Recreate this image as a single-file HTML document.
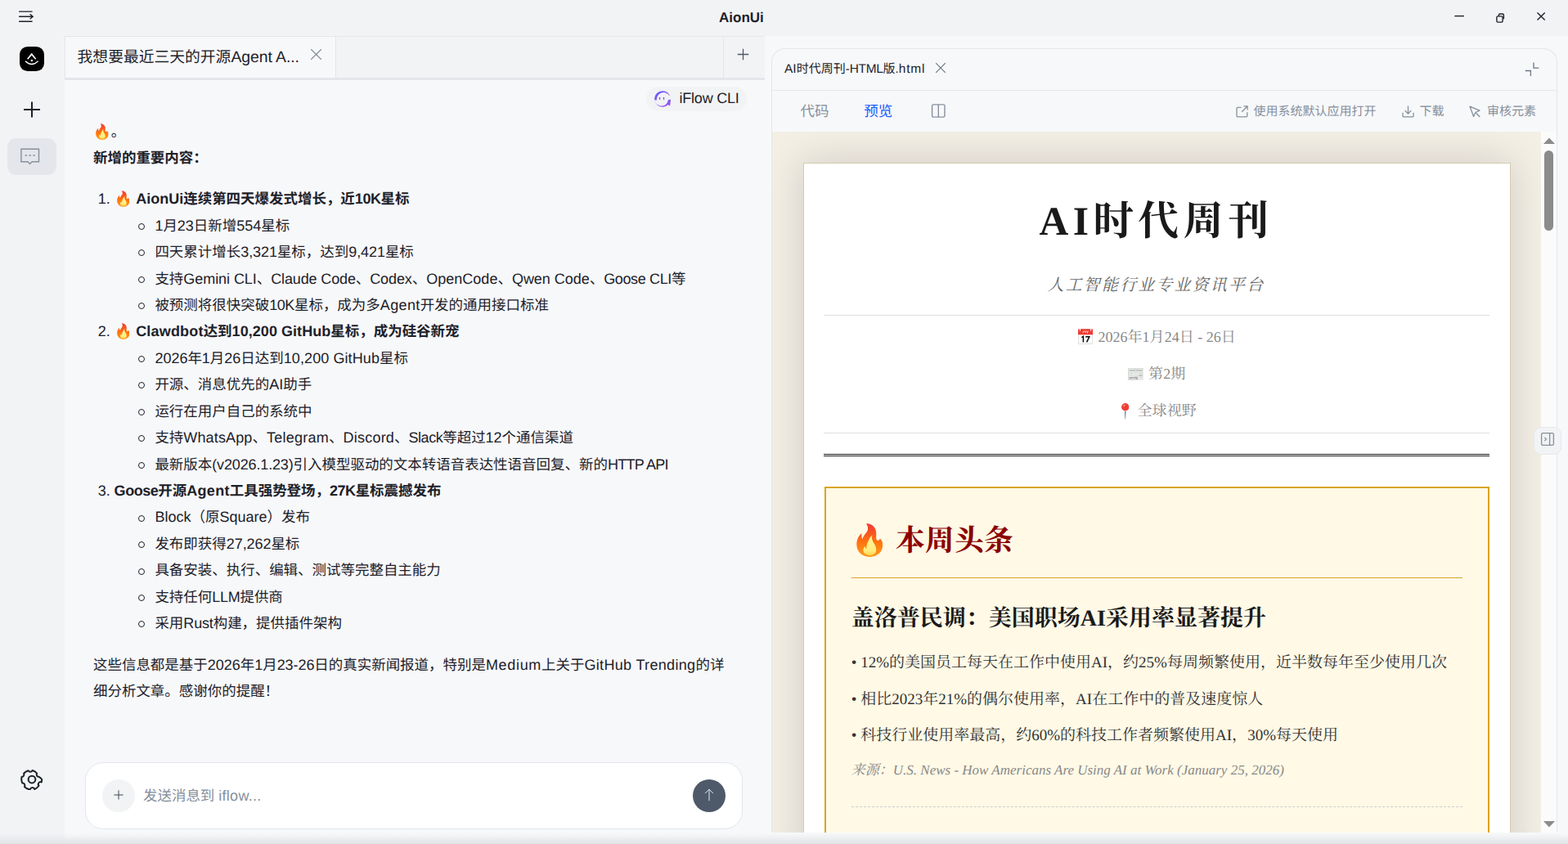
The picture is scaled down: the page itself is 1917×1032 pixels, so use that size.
<!DOCTYPE html>
<html lang="zh-CN"><head>
<meta charset="utf-8">
<title>AionUi</title>
<style>
*{box-sizing:border-box;margin:0;padding:0}
html,body{width:1917px;height:1032px;overflow:hidden}
body{background:#f2f3f5;font-family:"Liberation Sans","Noto Sans CJK SC",sans-serif;color:#1d2129;position:relative;-webkit-font-smoothing:antialiased;text-rendering:geometricPrecision}
.abs{position:absolute}
svg{display:block}
svg.em{display:inline-block}
/* ---------- title bar ---------- */
#title{position:absolute;left:806.4px;top:0;width:200px;height:44px;line-height:44px;text-align:center;font-weight:700;font-size:17px;color:#1d2129}
/* ---------- main area ---------- */
#main{position:absolute;left:79px;top:44px;width:1838px;height:988px;background:#f7f8fa}
#tabbar{position:absolute;left:0;top:0;width:856px;height:54px;background:#f2f3f5;border-top:1px solid #e5e6eb;border-left:1px solid #e5e6eb;border-bottom:3px solid #e5e6eb}
#tab{position:absolute;left:0;top:0;width:331px;height:50px;background:#f7f8fa;border-right:1px solid #e5e6eb;font-size:18.8px;line-height:50px;padding-left:14.6px;white-space:nowrap}
#tabplus{position:absolute;left:804px;top:0;width:52px;height:50px;border-left:1px solid #e5e6eb}
/* pill */
#pill{position:absolute;left:711px;top:62px;width:123px;height:30px;border-radius:15px;background:#f2f3f5;font-size:17.48px;line-height:28px;padding-left:40.5px;white-space:nowrap}
/* chat text */
#chat{position:absolute;left:35px;top:0;width:790px;font-size:17.48px;line-height:32.44px;color:#1d2129;white-space:nowrap}
#chat .ln{position:absolute;left:0;height:32.44px}
#chat .num{position:absolute;left:5.8px}
#chat .it{position:absolute;left:25.6px;font-weight:700}
#chat .sub{position:absolute;left:75.4px}
#chat .sub i{position:absolute;left:-20.3px;top:13.2px;width:8px;height:8px;border:1.4px solid #1d2129;border-radius:50%}
.em.fire{width:.9em;height:1.14em;margin:0 .172em;vertical-align:-.23em}
/* input */
#input{position:absolute;left:25px;top:888px;width:804px;height:82px;border:1px solid #e5e6eb;border-radius:22px;background:#fff}
#iplus{position:absolute;left:20px;top:20px;width:40px;height:40px;border-radius:50%;background:#f2f3f5}
#iph{position:absolute;left:70px;top:24px;font-size:17.48px;line-height:32px;color:#86909c;white-space:nowrap}
#send{position:absolute;left:742px;top:20px;width:40px;height:40px;border-radius:50%;background:#4e5969}
/* ---------- preview panel ---------- */
#pv{position:absolute;left:864px;top:15px;width:961px;height:959px;border:1px solid #e5e6eb;border-bottom:none;border-radius:17px 17px 0 0;background:#f7f8fa;overflow:hidden}
#pvhead{position:absolute;left:0;top:0;width:100%;height:51px;border-bottom:1px solid #e5e6eb}
#pvname{position:absolute;left:15px;top:10px;font-size:15.0px;line-height:30px;color:#1d2129;white-space:nowrap}
#pvtools{position:absolute;left:0;top:51px;width:100%;height:50px;font-size:15.0px;color:#86909c}
#pvtools>span{position:absolute;top:11px;line-height:30px;white-space:nowrap}
#frame{position:absolute;left:0;top:101px;width:940px;height:858px;background:#f3efe5;overflow:hidden;font-family:"Liberation Serif","Noto Serif CJK SC",serif}
#track{position:absolute;left:940px;top:101px;width:19px;height:858px;background:#fbfbfb}
#thumb{position:absolute;left:4px;top:23px;width:11px;height:98px;border-radius:6px;background:#8b8b8b}
#page{position:absolute;left:38.2px;top:38.2px;width:864.5px;height:1400px;background:#fff;border:1px solid #d5cbb0;box-shadow:0 0 46px rgba(20,15,0,.155)}
#page .c{position:absolute;left:0;width:100%;text-align:center;white-space:nowrap}
#h1{top:36.6px;font-size:49.5px;letter-spacing:5.5px;font-weight:700;color:#1a1a1a;line-height:70px}
#sub{top:134.7px;font-size:19.9px;letter-spacing:2.25px;font-style:italic;color:#666;line-height:30px}
.meta{font-size:18.05px;color:#888;line-height:30px}
.hr{position:absolute;left:25px;width:814px;height:0}
#box{position:absolute;left:25.6px;top:396px;width:813px;height:700px;border:2.2px solid #daa520;background:#fff9e6}
#box h2{position:absolute;left:31px;top:39px;font-size:36.1px;line-height:50px;color:#8b0000;font-weight:700;white-space:nowrap}
#box h3{position:absolute;left:31px;top:138.2px;font-size:28px;line-height:44px;color:#1a1a1a;font-weight:700;white-space:nowrap}
#box p{position:absolute;left:31px;font-size:19px;line-height:30px;color:#333;white-space:nowrap}
#box p.src{font-size:17px;color:#888;font-style:italic}
/* bottom shade */
#shade{position:absolute;left:0;top:1019px;width:1917px;height:13px;background:linear-gradient(#f5f6f800,#e2e3e6)}

#pg{position:absolute;left:-1px;top:-1px;width:100%;height:100%}
</style>
</head>
<body>

<svg width="0" height="0" style="position:absolute">
<defs>
<linearGradient id="fg1" x1="0" y1="0" x2="0" y2="1"><stop offset="0" stop-color="#ef3b3a"></stop><stop offset=".3" stop-color="#f9571f"></stop><stop offset=".6" stop-color="#ff780e"></stop><stop offset="1" stop-color="#ff9a1d"></stop></linearGradient>
<linearGradient id="fg2" x1="0" y1="0" x2="0" y2="1"><stop offset="0" stop-color="#fff39a"></stop><stop offset=".75" stop-color="#ffee84"></stop><stop offset="1" stop-color="#ffd54a"></stop></linearGradient>
<symbol id="fire" viewBox="195 170 545 690">
<path fill="url(#fg1)" d="M395 175C470 170 560 210 590 300C610 360 600 420 600 460C600 500 615 522 630 522C655 522 670 502 680 480C720 520 740 570 735 625C728 760 620 856 480 856C330 856 200 760 200 600C200 500 240 420 305 370C300 410 300 460 318 492C330 440 370 390 410 340C440 300 440 230 395 175Z"></path>
<path fill="url(#fg2)" d="M520 415C500 470 520 520 550 570C590 630 612 690 596 750C580 800 530 824 480 824C400 824 335 790 335 715C335 680 355 655 375 640C375 665 385 685 400 695C400 640 410 590 440 530C460 480 490 440 520 415Z"></path>
</symbol>
<symbol id="cal" viewBox="0 0 182 190">
<rect x="1" y="2" width="180" height="187" rx="12" fill="#d3dad6"></rect>
<rect x="8" y="8" width="166" height="174" rx="6" fill="#fbfbfb"></rect>
<path d="M1 14a12 12 0 0 1 12-12h156a12 12 0 0 1 12 12v58H1z" fill="#f0392f"></path>
<path d="M19 0h12v22a6 6 0 0 1-12 0zM151 0h12v22a6 6 0 0 1-12 0z" fill="#fbe9e7"></path>
<path d="M52 44c14-2 22-20 30-22M70 30l-4 18M84 30v16M98 22l-4 26M108 30l6 14 8-16-10 30" fill="none" stroke="#fff" stroke-width="7" opacity=".85"></path>
<path d="M44 106l20-12v70" fill="none" stroke="#0a0a0a" stroke-width="15" stroke-linejoin="miter"></path>
<path d="M92 97h46L106 164" fill="none" stroke="#0a0a0a" stroke-width="15" stroke-linejoin="miter"></path>
</symbol>
<symbol id="news" viewBox="0 0 196 157">
<rect x="0" y="0" width="196" height="157" rx="6" fill="#c9cdca"></rect>
<rect x="6" y="5" width="184" height="146" fill="#e9ebe9"></rect>
<rect x="18" y="22" width="160" height="14" fill="#b4b7b4"></rect>
<circle cx="96" cy="29" r="13" fill="#e9ebe9" stroke="#a9aca9" stroke-width="4"></circle>
<path d="M18 58h40M18 72h40M18 92h40M76 58h48M76 92h48M76 106h48" stroke="#d4d7d4" stroke-width="8"></path>
<path d="M132 92h46" stroke="#a5a8a5" stroke-width="10"></path>
<path d="M132 116h46M132 58h46M132 72h46" stroke="#d0d3d0" stroke-width="8"></path>
<rect x="18" y="110" width="100" height="32" fill="#a9aca9"></rect>
<path d="M24 142l14-20 12 14 14-22 12 18 14-10 16 20z" fill="#dfe1df"></path>
</symbol>
<symbol id="pin" viewBox="0 0 95 198">
<path d="M40 100h15l-4.5 92-3 6-3-6z" fill="#4c8797"></path>
<circle cx="47.5" cy="47.5" r="47.5" fill="#ec3f34"></circle>
<ellipse cx="34" cy="27" rx="19" ry="11" fill="#ff8a73" opacity=".75" transform="rotate(-32 34 27)"></ellipse>
</symbol>
</defs>
</svg>

<!-- ===== title bar ===== -->
<svg class="abs" style="left:22px;top:11px" width="22" height="18" viewBox="0 0 22 18" fill="none" stroke="#1d2129" stroke-width="1.4"><path d="M1.1 3.1h16.5M1.1 9.2h16.8M1.1 15.3h16.5M14.6 6.2l3.6 3-3.6 3"></path></svg>
<div id="title">AionUi</div>
<svg class="abs" style="left:1770px;top:8px" width="126" height="26" viewBox="0 0 126 26" fill="none" stroke="#1d2129" stroke-width="1.4"><path d="M8.3 11.6h11.6"></path><rect x="59.9" y="11.9" width="7.2" height="7.2" rx="1.3"></rect><path d="M62.4 11.7v-1.2a1.5 1.5 0 0 1 1.5-1.5h3a1.5 1.5 0 0 1 1.5 1.5v4.8"></path><path d="M109.5 7.4l9.2 9.2M118.7 7.4l-9.2 9.2"></path></svg>
<!-- ===== sidebar ===== -->
<svg class="abs" style="left:24px;top:57px" width="30" height="30" viewBox="0 0 30 30"><rect width="30" height="30" rx="9.8" fill="#000"></rect><path d="M9.7 15.2L14.7 9.2l5 6" fill="none" stroke="#fff" stroke-width="1.7"></path><circle cx="14.8" cy="16.9" r="1.25" fill="#fff"></circle><path d="M7 17.8Q14.8 25.4 22.7 17.6" fill="none" stroke="#fff" stroke-width="1.3"></path></svg>
<svg class="abs" style="left:28px;top:123px" width="22" height="22" viewBox="0 0 22 22" stroke="#1d2129" stroke-width="2" fill="none"><path d="M1 11h20M11 1.5v19"></path></svg>
<div class="abs" style="left:9px;top:169px;width:60px;height:45px;border-radius:11px;background:#e5e6eb"></div>
<svg class="abs" style="left:24px;top:180px" width="26" height="23" viewBox="0 0 26 23" fill="none" stroke="#86909c" stroke-width="1.4"><path d="M1.9 2.2h21.6v15.6h-8.4l-2.6 2.6-2.6-2.6H1.9z"></path><path d="M6.6 10h2.4M11.5 10h2.4M16.4 10h2.4"></path></svg>
<svg class="abs" style="left:24px;top:938.3px" width="30" height="30" viewBox="0 0 48 48" fill="none" stroke="#1d2129" stroke-width="3.2" stroke-linejoin="round"><path d="M18.28 43.17a20 20 0 0 1-8.36-4.9 4.4 4.4 0 0 0-4.04-6.98A20 20 0 0 1 4 24c0-1.74.23-3.43.66-5.04h.1a4.4 4.4 0 0 0 3.83-6.56 20 20 0 0 1 8.9-5.66 4.4 4.4 0 0 0 7.87 0l.16-.3a20 20 0 0 1 8.9 5.66 4.4 4.4 0 0 0 3.83 6.86h.1A20 20 0 0 1 44 24c0 1.9-.27 3.73-.76 5.47a4.4 4.4 0 0 0-5.16 6.9 20 20 0 0 1-8.36 6.8 4.4 4.4 0 0 0-8.44 0z" transform="translate(-.5 0)"></path><circle cx="24" cy="24" r="7"></circle></svg>

<!-- ===== main ===== -->
<div id="main">
 <div id="tabbar">
  <div id="tab"><span class="cj">我想要最近三天的开源</span><span style="font-size:103%;letter-spacing:-0.0023em">Agent A...</span></div>
  <svg class="abs" style="left:299.1px;top:14.3px" width="15" height="15" viewBox="0 0 15 15" stroke="#86909c" stroke-width="1.25" fill="none"><path d="M1.2 1.2l12.6 12.6M13.8 1.2L1.2 13.8"></path></svg>
  <div id="tabplus"><svg class="abs" style="left:16.3px;top:13.7px" width="15" height="15" viewBox="0 0 15 15" stroke="#4e5969" stroke-width="1.3" fill="none"><path d="M.8 7.5h13.4M7.5.8v13.4"></path></svg></div>
 </div>
 <div id="pill">
  <svg class="abs" style="left:10px;top:4.9px" width="20" height="20" viewBox="240 130 240 240"><defs><linearGradient id="pg" x1="0" y1="0" x2="1" y2="1"><stop offset="0" stop-color="#5560f6"></stop><stop offset=".55" stop-color="#8a58f6"></stop><stop offset="1" stop-color="#c054f3"></stop></linearGradient></defs><g fill="url(#pg)"><path d="M243.1 266.4A118 118 0 0 1 464.2 194.6L463.3 208.6A100 100 0 0 0 276 269.4Z"></path><path d="M244.6 274.5A118 118 0 0 0 477.6 260.3L443.8 261.5A100 100 0 0 1 246.4 273.6Z"></path><path d="M436 296C446 288 452 272 452 262L478 262C478 290 474 322 470 352C458 342 444 334 430 330Z"></path><rect x="311" y="222" width="15" height="42" rx="7.5"></rect><rect x="371" y="222" width="15" height="42" rx="7.5"></rect></g></svg>
  <span style="font-size:103%;letter-spacing:-0.0120em">iFlow CLI</span>
 </div>

 <div id="chat">
  <div class="ln" style="top:100.8px"><svg class="em fire"><use href="#fire" width="100%" height="100%"></use></svg><span class="cj">。</span></div>
  <div class="ln" style="top:133.3px;font-weight:700"><span class="cj">新增的重要内容：</span></div>
  <div class="ln" style="top:183.20px"><span class="num"><span style="font-size:103%;letter-spacing:-0.0092em">1.</span></span><span class="it"><svg class="em fire"><use href="#fire" width="100%" height="100%"></use></svg> <span style="font-size:103%;letter-spacing:0.0004em">AionUi</span><span class="cj">连续第四天爆发式增长，近</span><span style="font-size:103%;letter-spacing:-0.0264em">10K</span><span class="cj">星标</span></span></div>
  <div class="ln" style="top:215.64px"><span class="sub"><i></i><span style="font-size:103%;letter-spacing:-0.0008em">1</span><span class="cj">月</span><span style="font-size:103%;letter-spacing:-0.0008em">23</span><span class="cj">日新增</span><span style="font-size:103%;letter-spacing:-0.0008em">554</span><span class="cj">星标</span></span></div>
  <div class="ln" style="top:248.08px"><span class="sub"><i></i><span class="cj">四天累计增长</span><span style="font-size:103%;letter-spacing:-0.0042em">3,321</span><span class="cj">星标，达到</span><span style="font-size:103%;letter-spacing:-0.0042em">9,421</span><span class="cj">星标</span></span></div>
  <div class="ln" style="top:280.52px"><span class="sub"><i></i><span class="cj">支持</span><span style="font-size:103%;letter-spacing:-0.0034em">Gemini CLI</span><span class="cj">、</span><span style="font-size:103%;letter-spacing:-0.0078em">Claude Code</span><span class="cj">、</span><span style="font-size:103%;letter-spacing:-0.0063em">Codex</span><span class="cj">、</span><span style="font-size:103%;letter-spacing:0.0015em">OpenCode</span><span class="cj">、</span><span style="font-size:103%;letter-spacing:-0.0015em">Qwen Code</span><span class="cj">、</span><span style="font-size:103%;letter-spacing:-0.0202em">Goose CLI</span><span class="cj">等</span></span></div>
  <div class="ln" style="top:312.96px"><span class="sub"><i></i><span class="cj">被预测将很快突破</span><span style="font-size:103%;letter-spacing:-0.0225em">10K</span><span class="cj">星标，成为多</span><span style="font-size:103%;letter-spacing:0.0205em">Agent</span><span class="cj">开发的通用接口标准</span></span></div>
  <div class="ln" style="top:345.40px"><span class="num"><span style="font-size:103%;letter-spacing:-0.0092em">2.</span></span><span class="it"><svg class="em fire"><use href="#fire" width="100%" height="100%"></use></svg> <span style="font-size:103%;letter-spacing:0.0101em">Clawdbot</span><span class="cj">达到</span><span style="font-size:103%;letter-spacing:0.0030em">10,200 GitHub</span><span class="cj">星标，成为硅谷新宠</span></span></div>
  <div class="ln" style="top:377.84px"><span class="sub"><i></i><span style="font-size:103%;letter-spacing:-0.0008em">2026</span><span class="cj">年</span><span style="font-size:103%;letter-spacing:-0.0008em">1</span><span class="cj">月</span><span style="font-size:103%;letter-spacing:-0.0008em">26</span><span class="cj">日达到</span><span style="font-size:103%;letter-spacing:0.0050em">10,200 GitHub</span><span class="cj">星标</span></span></div>
  <div class="ln" style="top:410.28px"><span class="sub"><i></i><span class="cj">开源、消息优先的</span><span style="font-size:103%;letter-spacing:0.0023em">AI</span><span class="cj">助手</span></span></div>
  <div class="ln" style="top:442.72px"><span class="sub"><i></i><span class="cj">运行在用户自己的系统中</span></span></div>
  <div class="ln" style="top:475.16px"><span class="sub"><i></i><span class="cj">支持</span><span style="font-size:103%;letter-spacing:0.0080em">WhatsApp</span><span class="cj">、</span><span style="font-size:103%;letter-spacing:0.0140em">Telegram</span><span class="cj">、</span><span style="font-size:103%;letter-spacing:0.0123em">Discord</span><span class="cj">、</span><span style="font-size:103%;letter-spacing:-0.0265em">Slack</span><span class="cj">等超过</span><span style="font-size:103%;letter-spacing:-0.0008em">12</span><span class="cj">个通信渠道</span></span></div>
  <div class="ln" style="top:507.60px"><span class="sub"><i></i><span class="cj">最新版本</span>(<span style="font-size:103%;letter-spacing:-0.0081em">v2026.1.23)</span><span class="cj">引入模型驱动的文本转语音表达性语音回复、新的</span><span style="font-size:103%;letter-spacing:-0.0406em">HTTP API</span></span></div>
  <div class="ln" style="top:540.04px"><span class="num"><span style="font-size:103%;letter-spacing:-0.0092em">3.</span></span><span class="it"><span style="font-size:103%;letter-spacing:-0.0257em">Goose</span><span class="cj">开源</span><span style="font-size:103%;letter-spacing:0.0169em">Agent</span><span class="cj">工具强势登场，</span><span style="font-size:103%;letter-spacing:-0.0264em">27K</span><span class="cj">星标震撼发布</span></span></div>
  <div class="ln" style="top:572.48px"><span class="sub"><i></i><span style="font-size:103%;letter-spacing:0.0016em">Block</span><span class="cj">（原</span><span style="font-size:103%;letter-spacing:-0.0002em">Square</span><span class="cj">）发布</span></span></div>
  <div class="ln" style="top:604.92px"><span class="sub"><i></i><span class="cj">发布即获得</span><span style="font-size:103%;letter-spacing:-0.0036em">27,262</span><span class="cj">星标</span></span></div>
  <div class="ln" style="top:637.36px"><span class="sub"><i></i><span class="cj">具备安装、执行、编辑、测试等完整自主能力</span></span></div>
  <div class="ln" style="top:669.80px"><span class="sub"><i></i><span class="cj">支持任何</span><span style="font-size:103%;letter-spacing:-0.0158em">LLM</span><span class="cj">提供商</span></span></div>
  <div class="ln" style="top:702.24px"><span class="sub"><i></i><span class="cj">采用</span><span style="font-size:103%;letter-spacing:-0.0092em">Rust</span><span class="cj">构建，提供插件架构</span></span></div>
  <div class="ln" style="top:752.7px"><span class="cj">这些信息都是基于</span><span style="font-size:103%;letter-spacing:-0.0008em">2026</span><span class="cj">年</span><span style="font-size:103%;letter-spacing:-0.0008em">1</span><span class="cj">月</span><span style="font-size:103%;letter-spacing:-0.0047em">23-26</span><span class="cj">日的真实新闻报道，特别是</span><span style="font-size:103%;letter-spacing:0.0378em">Medium</span><span class="cj">上关于</span><span style="font-size:103%;letter-spacing:0.0182em">GitHub Trending</span><span class="cj">的详</span></div>
  <div class="ln" style="top:785.2px"><span class="cj">细分析文章。感谢你的提醒！</span></div>
 </div>

 <div id="input">
  <div id="iplus"><svg class="abs" style="left:11.6px;top:10.9px" width="16" height="16" viewBox="0 0 16 16" stroke="#3f4855" stroke-width="1" fill="none"><path d="M2.4 8h11.2M8 2.4v11.2"></path></svg></div>
  <div id="iph"><span class="cj">发送消息到</span> <span style="font-size:103%;letter-spacing:0.0165em">iflow...</span></div>
  <div id="send"><svg class="abs" style="left:10px;top:9.2px" width="20" height="20" viewBox="0 0 20 20" stroke="#e8eaee" stroke-width="1" fill="none"><path d="M10 17.2V3.2M5.1 8.1L10 3.2l4.9 4.9"></path></svg></div>
 </div>

 <!-- ===== preview panel ===== -->
 <div id="pv">
  <div id="pvhead">
   <div id="pvname"><span style="font-size:103%;letter-spacing:0.0023em">AI</span><span class="cj">时代周刊</span>-<span style="font-size:103%;letter-spacing:-0.0184em">HTML</span><span class="cj">版</span>.<span style="font-size:103%;letter-spacing:0.0549em">html</span></div>
   <svg class="abs" style="left:198.6px;top:15.6px" width="14" height="14" viewBox="0 0 14 14" stroke="#6b7785" stroke-width="1.2" fill="none"><path d="M1.2 1.2l11.6 11.6M12.8 1.2L1.2 12.8"></path></svg>
   <svg class="abs" style="left:919px;top:16px" width="19" height="19" viewBox="0 0 19 19" stroke="#6b7785" stroke-width="1.3" fill="none"><path d="M12 .6v6.6h6.3M1.8 10.5h6.6v6.6"></path></svg>
  </div>
  <div id="pvtools">
   <span style="left:34.5px;top:9.6px;font-size:17.5px"><span class="cj">代码</span></span>
   <span style="left:112.3px;top:9.6px;font-size:17.5px;color:#165dff"><span class="cj">预览</span></span>
   <svg class="abs" style="left:193.8px;top:15.1px" width="19" height="19" viewBox="0 0 19 19" stroke="#86909c" stroke-width="1.4" fill="none"><rect x="1.6" y="1.9" width="15.4" height="15.2" rx="1.6"></rect><path d="M9.3 1.9v15.2"></path></svg>
   <svg class="abs" style="left:566px;top:17px" width="17" height="17" viewBox="0 0 17 17" stroke="#86909c" stroke-width="1.3" fill="none"><path d="M14.8 9.3v4.2a1.3 1.3 0 0 1-1.3 1.3H3.3A1.3 1.3 0 0 1 2 13.5V4.6a1.3 1.3 0 0 1 1.3-1.3h4.3M10.5 1.8h4.6v4.6M15.1 1.8L8.2 8.7"></path></svg>
   <span style="left:588.5px"><span class="cj">使用系统默认应用打开</span></span>
   <svg class="abs" style="left:769px;top:17px" width="17" height="17" viewBox="0 0 17 17" stroke="#86909c" stroke-width="1.3" fill="none"><path d="M2 9.8v4.1a.9.9 0 0 0 .9.9h11.2a.9.9 0 0 0 .9-.9V9.8M8.5 1.5v9.5M4.7 7.3l3.8 3.8 3.8-3.8"></path></svg>
   <span style="left:791.5px"><span class="cj">下载</span></span>
   <svg class="abs" style="left:851px;top:17px" width="17" height="17" viewBox="0 0 17 17" stroke="#86909c" stroke-width="1.3" fill="none" stroke-linejoin="round"><path d="M2 2.2l4.6 12.2 2.2-4.9 5.1-2.3zM9.6 10.3l4.7 4.7"></path></svg>
   <span style="left:874px"><span class="cj">审核元素</span></span>
  </div>
  <div id="frame">
   <div id="page"><div id="pg">
    <div class="c" id="h1">AI<span class="cj">时代周刊</span></div>
    <div class="c" id="sub"><span class="cj">人工智能行业专业资讯平台</span></div>
    <div class="hr" style="top:185.7px;border-top:1px solid #ddd"></div>
    <div class="c meta" style="top:197.5px"><svg class="em" style="width:18.2px;height:19px;margin:0 1.85px;vertical-align:-3.6px"><use href="#cal" width="100%" height="100%"></use></svg> 2026<span class="cj">年</span>1<span class="cj">月</span>24<span class="cj">日</span> - 26<span class="cj">日</span></div>
    <div class="c meta" style="top:242.9px"><svg class="em" style="width:19.6px;height:15.7px;margin:0 1.15px;vertical-align:-2.2px"><use href="#news" width="100%" height="100%"></use></svg> <span class="cj">第</span>2<span class="cj">期</span></div>
    <div class="c meta" style="top:287.8px"><svg class="em" style="width:9.5px;height:19.8px;margin:0 5.2px 0 7.2px;vertical-align:-4.6px"><use href="#pin" width="100%" height="100%"></use></svg> <span class="cj">全球视野</span></div>
    <div class="hr" style="top:330px;border-top:1px solid #ddd"></div>
    <div class="hr" style="top:355.6px;height:3.3px;border-top:1.1px solid #1a1a1a;border-bottom:1.1px solid #1a1a1a"></div>
    <div id="box">
     <h2><svg class="em fire"><use href="#fire" width="100%" height="100%"></use></svg> <span class="cj">本周头条</span></h2>
     <div class="abs" style="left:31px;top:109.3px;width:747px;border-top:1.1px solid #daa520"></div>
     <h3><span class="cj">盖洛普民调：美国职场</span>AI<span class="cj">采用率显著提升</span></h3>
     <p style="top:199.2px">• 12%<span class="cj">的美国员工每天在工作中使用</span>AI<span class="cj">，约</span>25%<span class="cj">每周频繁使用，近半数每年至少使用几次</span></p>
     <p style="top:244.2px">• <span class="cj">相比</span>2023<span class="cj">年</span>21%<span class="cj">的偶尔使用率，</span>AI<span class="cj">在工作中的普及速度惊人</span></p>
     <p style="top:288.2px">• <span class="cj">科技行业使用率最高，约</span>60%<span class="cj">的科技工作者频繁使用</span>AI<span class="cj">，</span>30%<span class="cj">每天使用</span></p>
     <p class="src" style="top:329.8px"><span class="cj">来源：</span>U.S. News - How Americans Are Using AI at Work (January 25, 2026)</p>
     <div class="abs" style="left:31px;top:389px;width:747px;border-top:1px dashed #ccc"></div>
    </div>
   </div></div>
  </div>
  <div id="track"><svg class="abs" style="left:3px;top:7px" width="14" height="8" viewBox="0 0 14 8"><path d="M0 8L7 .5 14 8z" fill="#8b8b8b"></path></svg><div id="thumb"></div><svg class="abs" style="left:3px;top:842.6px" width="14" height="8" viewBox="0 0 14 8"><path d="M0 0L7 7.5 14 0z" fill="#8b8b8b"></path></svg></div>
 </div>
 <!-- side toggle -->
 <div class="abs" style="left:1795.5px;top:478px;width:34px;height:34px;border-radius:9px;background:#f2f3f5;border:1px solid #e8e9ed"></div>
 <svg class="abs" style="left:1803.5px;top:484px" width="19" height="19" viewBox="0 0 19 19" stroke="#86909c" stroke-width="1.3" fill="none"><rect x="1.6" y="1.6" width="14.8" height="14.8" rx="1.6"></rect><path d="M11.6 1.6v14.8"></path><path d="M5.4 7l2.1 2L5.4 11" stroke-width="1.2"></path></svg>
</div>
<div id="shade"></div>



</body></html>
